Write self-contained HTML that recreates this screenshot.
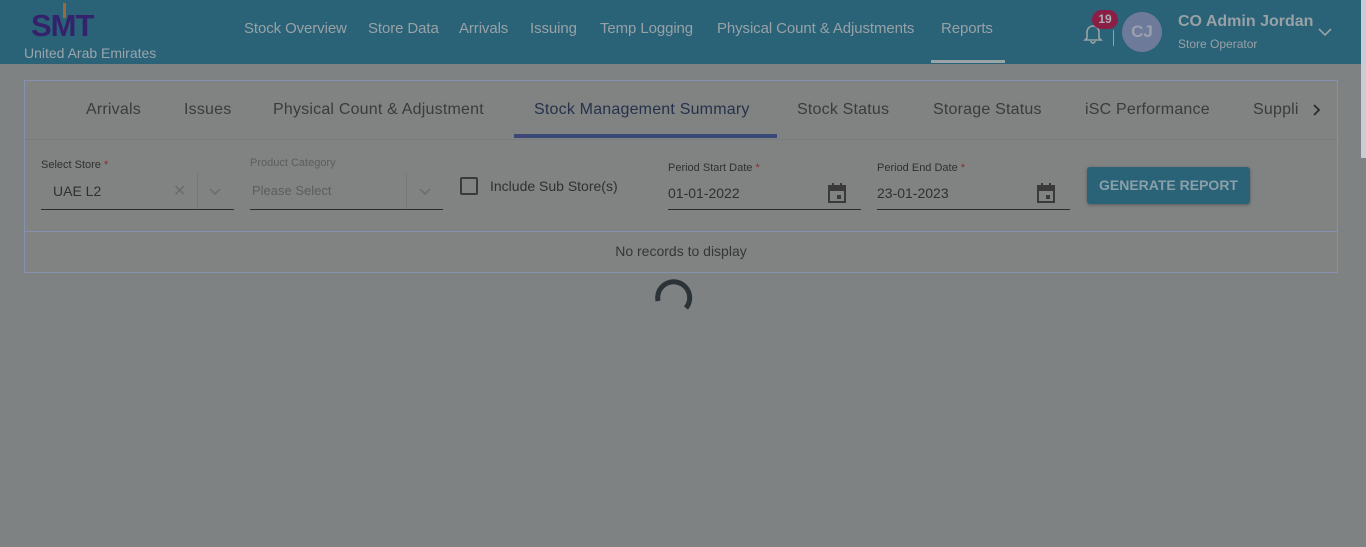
<!DOCTYPE html>
<html><head><style>
*{box-sizing:border-box;margin:0;padding:0}
body{width:1366px;height:547px;overflow:hidden;background:#7e8283;font-family:"Liberation Sans",Roboto,sans-serif;position:relative}
.hdr{position:absolute;left:0;top:0;width:1361px;height:64px;background:#2a6278}
.sb{position:absolute;right:0;top:0;width:5px;height:547px;background:#7f8283}
.sb i{position:absolute;left:0;top:0;width:5px;height:158px;background:#c9ccd6}
.logo{position:absolute;left:31px;top:8px;font-size:31px;font-weight:bold;color:#34226a;letter-spacing:-1px}
.arr{position:absolute;left:63px;top:3px;width:3px;height:15px;background:#9a6a3a}
.ua{position:absolute;left:24px;top:45px;font-size:14px;color:#9aa6ab}
.nav{position:absolute;top:20px;font-size:15px;color:#98a2a6;letter-spacing:-.1px}
.ul{position:absolute;left:931px;top:60px;width:74px;height:3px;background:#9aa3a6}
.card{position:absolute;left:24px;top:80px;width:1314px;height:193px;border:1px solid #8890b0;background:#818383}
.tabs{position:absolute;left:0;top:0;width:1312px;height:59px;border-bottom:1px solid #7a7c7e}
.tab{position:absolute;top:20px;font-size:16px;color:#3a3b3c;letter-spacing:.2px}
.lbl{position:absolute;font-size:11px;color:#2f3030}
.req{color:#8a2a2a}
.val{position:absolute;font-size:14px;color:#2f3030}
.line{position:absolute;height:1px;background:#2c2c2c}
.btn{position:absolute;left:1062px;top:86px;width:163px;height:37px;background:#2a6278;border-radius:3px;color:#8aa0a8;font-weight:bold;font-size:14px;text-align:center;line-height:36px;box-shadow:0 1px 3px rgba(0,0,0,.3)}
</style></head><body>
<div class="hdr">
<div class="logo">SMT</div>
<div class="arr"></div>
<div class="ua">United Arab Emirates</div>
<div class="nav" style="left:244px">Stock Overview</div>
<div class="nav" style="left:368px">Store Data</div>
<div class="nav" style="left:459px">Arrivals</div>
<div class="nav" style="left:530px">Issuing</div>
<div class="nav" style="left:600px">Temp Logging</div>
<div class="nav" style="left:717px">Physical Count &amp; Adjustments</div>
<div class="nav" style="left:941px">Reports</div>
<div class="ul"></div>
<svg style="position:absolute;left:1083px;top:22px" width="20" height="22" viewBox="0 0 20 22"><path d="M4 16V10a6 6 0 0112 0v6l2 2H2z M8 19a2 2 0 004 0" fill="none" stroke="#98a2a6" stroke-width="1.6"/></svg>
<div style="position:absolute;left:1092px;top:10px;width:26px;height:19px;border-radius:10px;background:#8a1e44;color:#a8b0b4;font-size:12px;font-weight:bold;text-align:center;line-height:19px">19</div>
<div style="position:absolute;left:1113px;top:30px;width:1px;height:16px;background:#98a2a6"></div>
<div style="position:absolute;left:1122px;top:12px;width:40px;height:40px;border-radius:50%;background:#6e7a9a;color:#9aa0ae;font-weight:bold;font-size:17px;text-align:center;line-height:40px">CJ</div>
<div style="position:absolute;left:1178px;top:13px;font-size:16px;font-weight:bold;color:#98a2a6">CO Admin Jordan</div>
<div style="position:absolute;left:1178px;top:37px;font-size:12px;color:#98a2a6">Store Operator</div>
<svg style="position:absolute;left:1318px;top:28px" width="14" height="9"><path d="M1 1l6 6 6-6" fill="none" stroke="#98a2a6" stroke-width="1.6"/></svg>
</div>
<div class="sb"><i></i></div>
<div class="card">
<div class="tabs">
<div class="tab" style="left:61px">Arrivals</div>
<div class="tab" style="left:159px">Issues</div>
<div class="tab" style="left:248px">Physical Count &amp; Adjustment</div>
<div class="tab" style="left:509px;color:#25324a">Stock Management Summary</div>
<div style="position:absolute;left:489px;top:53px;width:263px;height:4px;background:#3a4878"></div>
<div class="tab" style="left:772px">Stock Status</div>
<div class="tab" style="left:908px">Storage Status</div>
<div class="tab" style="left:1060px">iSC Performance</div>
<div class="tab" style="left:1228px;width:46px;overflow:hidden;white-space:nowrap">Supplier</div>
<svg style="position:absolute;left:1288px;top:23px" width="8" height="12"><path d="M1 1l5 5-5 5" fill="none" stroke="#2a2a2a" stroke-width="1.8"/></svg>
</div>
<div class="lbl" style="left:16px;top:78px">Select Store <span class="req">*</span></div>
<div class="val" style="left:28px;top:102px">UAE L2</div>
<div style="position:absolute;left:148px;top:100px;font-size:16px;color:#6a6b6b">✕</div>
<div style="position:absolute;left:172px;top:92px;width:1px;height:36px;background:#777"></div>
<svg style="position:absolute;left:184px;top:107px" width="12" height="7"><path d="M1 1l5 5 5-5" fill="none" stroke="#6a6b6b" stroke-width="1.5"/></svg>
<div class="line" style="left:16px;top:128px;width:193px"></div>
<div class="lbl" style="left:225px;top:76px;color:#5c5d5d">Product Category</div>
<div class="val" style="left:227px;top:102px;color:#5c5d5d;font-size:13px">Please Select</div>
<div style="position:absolute;left:381px;top:92px;width:1px;height:36px;background:#777"></div>
<svg style="position:absolute;left:394px;top:107px" width="12" height="7"><path d="M1 1l5 5 5-5" fill="none" stroke="#6a6b6b" stroke-width="1.5"/></svg>
<div class="line" style="left:225px;top:128px;width:193px"></div>
<div style="position:absolute;left:435px;top:96px;width:18px;height:18px;border:2px solid #3a3a3a;border-radius:2px"></div>
<div class="val" style="left:465px;top:97px">Include Sub Store(s)</div>
<div class="lbl" style="left:643px;top:81px">Period Start Date <span class="req">*</span></div>
<div class="val" style="left:643px;top:104px">01-01-2022</div>
<svg style="position:absolute;left:802px;top:101px" width="20" height="22" viewBox="0 0 20 22"><path d="M2 4h16v16H2z" fill="none" stroke="#3a3a3a" stroke-width="2"/><path d="M2 4h16v4H2zM6 1v4M14 1v4" stroke="#3a3a3a" stroke-width="2" fill="#3a3a3a"/><rect x="10" y="13" width="4" height="4" fill="#3a3a3a"/></svg>
<div class="line" style="left:643px;top:128px;width:193px"></div>
<div class="lbl" style="left:852px;top:81px">Period End Date <span class="req">*</span></div>
<div class="val" style="left:852px;top:104px">23-01-2023</div>
<svg style="position:absolute;left:1011px;top:101px" width="20" height="22" viewBox="0 0 20 22"><path d="M2 4h16v16H2z" fill="none" stroke="#3a3a3a" stroke-width="2"/><path d="M2 4h16v4H2zM6 1v4M14 1v4" stroke="#3a3a3a" stroke-width="2" fill="#3a3a3a"/><rect x="10" y="13" width="4" height="4" fill="#3a3a3a"/></svg>
<div class="line" style="left:852px;top:128px;width:193px"></div>
<div class="btn">GENERATE REPORT</div>
<div style="position:absolute;left:0;top:150px;width:1312px;height:1px;background:#8890b0"></div>
<div style="position:absolute;left:0;top:162px;width:1312px;text-align:center;font-size:14px;color:#353636">No records to display</div>
</div>
<svg style="position:absolute;left:652px;top:271px" width="44" height="42" viewBox="0 0 44 42"><path d="M6 30A16 16 0 1 1 34 37" fill="none" stroke="#2c3338" stroke-width="5"/></svg>
</body></html>
